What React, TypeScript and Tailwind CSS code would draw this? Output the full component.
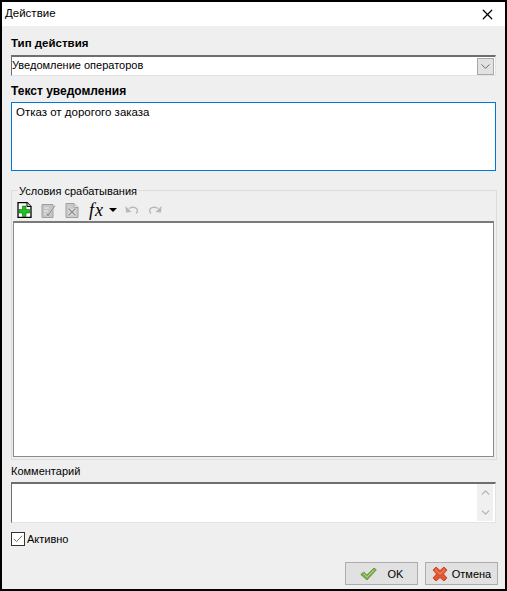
import React from 'react';
import { Check, ChevronDown, ChevronUp, X } from 'lucide-react';

const font = { fontFamily: '"Liberation Sans", Arial, sans-serif' };

function AddIcon() {
  return (
    <svg width="15" height="16" viewBox="0 0 15 16">
      <path d="M1 .5h9l4 4v11H1z" fill="#fff" stroke="#000" strokeWidth="1.300" />
      <path d="M10 .5v4h4" fill="#ccc" stroke="#000" />
      <path d="M5.500 4h3.500v3.500h3.500v3.500H9v3.500H5.500V11H2V7.500h3.500z" fill="#1fc41f" stroke="#0b5f0b" strokeWidth="0.6" />
    </svg>
  );
}

function EditIcon() {
  return (
    <svg width="15" height="15" viewBox="0 0 15 15">
      <path d="M1 1.500h11v13H1z" fill="#c4c4c4" stroke="#a0a0a0" />
      <path d="M3 5h5M3 8h4M3 11h2" stroke="#ececec" />
      <path d="M4.500 8l2.500 3 6.500-9 1 1-7 10.500H6z" fill="#8c8c8c" stroke="#f0f0f0" strokeWidth="0.5" />
    </svg>
  );
}

function DeleteIcon() {
  return (
    <svg width="14" height="15" viewBox="0 0 14 15">
      <path d="M1 .5h8l4 4v10H1z" fill="#cacaca" stroke="#a0a0a0" />
      <path d="M9 .5v4h4" fill="#e6e6e6" stroke="#a0a0a0" />
      <path d="M3.500 5.500l7 7M10.500 5.500l-7 7" stroke="#f4f4f4" strokeWidth="2.800" />
      <path d="M3.500 5.500l7 7M10.500 5.500l-7 7" stroke="#909090" strokeWidth="1.500" />
    </svg>
  );
}

function UndoIcon({ flip }: { flip?: boolean }) {
  return (
    <svg width="14" height="10" viewBox="0 0 14 10" style={flip ? { transform: 'scaleX(-1)' } : undefined}>
      <path d="M4 3.500c2-1.500 5.500-2 7.500 0 1.500 1.500 1 3.800-.5 5" fill="none" stroke="#b8b8b8" strokeWidth="1.400" />
      <path d="M.5 1l.5 6.500 5.500-.5z" fill="#b8b8b8" />
    </svg>
  );
}

function CheckIcon() {
  return (
    <svg width="17" height="14" viewBox="0 0 17 14">
      <path d="M.8 7.500l3-2.500 3 3L14 1l2.300 1.800L7 13z" fill="#7fb04f" stroke="#5c8a3a" strokeWidth="0.8" />
      <path d="M3.500 6.500l3.500 3.500 7-7" fill="none" stroke="#b4d68a" strokeWidth="0.9" />
    </svg>
  );
}

function CrossIcon() {
  return (
    <svg width="16" height="16" viewBox="0 0 16 16">
      <path d="M1 4l3-3 4 3.500L12 1l3 3-3.500 4 3.500 4-3 3-4-3.500L4 15l-3-3 3.500-4z" fill="#e2562f" stroke="#b93a1c" strokeWidth="0.8" />
      <path d="M3 3.500l5 4.500 5-4.500" fill="none" stroke="#f49a76" strokeWidth="1" />
    </svg>
  );
}

function DialogButton({ icon, label, gap }: { icon: React.ReactNode; label: string; gap: string }) {
  return (
    <button className={`flex h-[23px] w-[73px] items-center justify-center border border-[#adadad] bg-[#e1e1e1] text-[11px] text-black ${gap}`}>
      {icon}
      <span>{label}</span>
    </button>
  );
}

export default function App() {
  return (
    <div className="flex h-[591px] w-[507px] flex-col overflow-hidden border-2 border-black bg-[#efefef] text-[11px] leading-[14px] text-black" style={font}>
      <div className="flex h-[24px] shrink-0 items-center justify-between bg-white pl-[3px] pr-[9px] text-[11.500px]">
        <span className="pb-[2px]">Действие</span>
        <X size={17} strokeWidth={1.2} absoluteStrokeWidth />
      </div>

      <div className="flex min-h-0 flex-1 flex-col px-[9px] pt-[10px]">
        <div className="h-[19px] text-[11.500px] font-bold">Тип действия</div>
        <div className="flex h-[21px] w-[485px] shrink-0 items-center justify-between border-t-2 border-l border-t-[#6e6e6e] border-l-[#6e6e6e] bg-white border-b border-r border-b-[#e3e3e3] border-r-[#e3e3e3] pr-[1px]">
          <span className="pb-[3px]">Уведомление операторов</span>
          <span className="flex h-[17px] w-[17px] items-center justify-center border border-[#a8a8a8] bg-[#e2e2e2]">
            <ChevronDown size={15} strokeWidth={1.2} color="#444" />
          </span>
        </div>

        <div className="mt-[8px] h-[18px] text-[12px] font-bold">Текст уведомления</div>
        <div className="h-[69px] w-[485px] shrink-0 border border-[#0078d7] bg-white px-[4px] py-[2px] text-[11.500px]">Отказ от дорогого заказа</div>

        <div className="relative mt-[19px] flex h-[270px] w-[486px] shrink-0 flex-col border border-[#dcdcdc] px-[1px]">
          <span className="absolute top-[-7px] left-[6px] bg-[#efefef] px-[1px]">Условия срабатывания</span>
          <div className="flex h-[30px] shrink-0 items-center pt-[8px] pl-[4px]">
            <AddIcon />
            <span className="ml-[9px]"><EditIcon /></span>
            <span className="ml-[9px]"><DeleteIcon /></span>
            <span className="ml-[10px] font-['Liberation_Serif'] text-[18px] italic tracking-[1px]">fx</span>
            <span className="ml-[5px] h-0 w-0 border-x-[4px] border-t-[4px] border-x-transparent border-t-black" />
            <span className="ml-[8px]"><UndoIcon /></span>
            <span className="ml-[9px]"><UndoIcon flip /></span>
          </div>
          <div className="h-[236px] w-[481px] shrink-0 border border-[#8a8a8a] border-t-2 border-t-[#7a7a7a] bg-white" />
        </div>

        <div className="mt-[3px] h-[19px] pt-[1px]">Комментарий</div>
        <div className="flex h-[41px] w-[485px] shrink-0 justify-end border-t-2 border-l border-t-[#6e6e6e] border-l-[#6e6e6e] border-b border-r border-b-[#e3e3e3] border-r-[#e3e3e3] bg-white pr-[2px]">
          <div className="flex h-[37px] w-[16px] flex-col items-center justify-between bg-[#f0f0f0] py-[2px] text-[#b5b5b5]">
            <ChevronUp size={13} strokeWidth={2.500} />
            <ChevronDown size={13} strokeWidth={2.500} />
          </div>
        </div>

        <div className="mt-[9px] flex h-[14px] items-center gap-[2px]">
          <span className="flex h-[14px] w-[14px] items-center justify-center border border-[#333] bg-white">
            <Check size={12} strokeWidth={1.500} color="#444" />
          </span>
          <span>Активно</span>
        </div>

        <div className="mt-[16px] -mr-[2px] flex justify-end gap-[7px]">
          <DialogButton icon={<CheckIcon />} label="OK" gap="gap-[11px]" />
          <DialogButton icon={<CrossIcon />} label="Отмена" gap="gap-[4px]" />
        </div>
      </div>
    </div>
  );
}
